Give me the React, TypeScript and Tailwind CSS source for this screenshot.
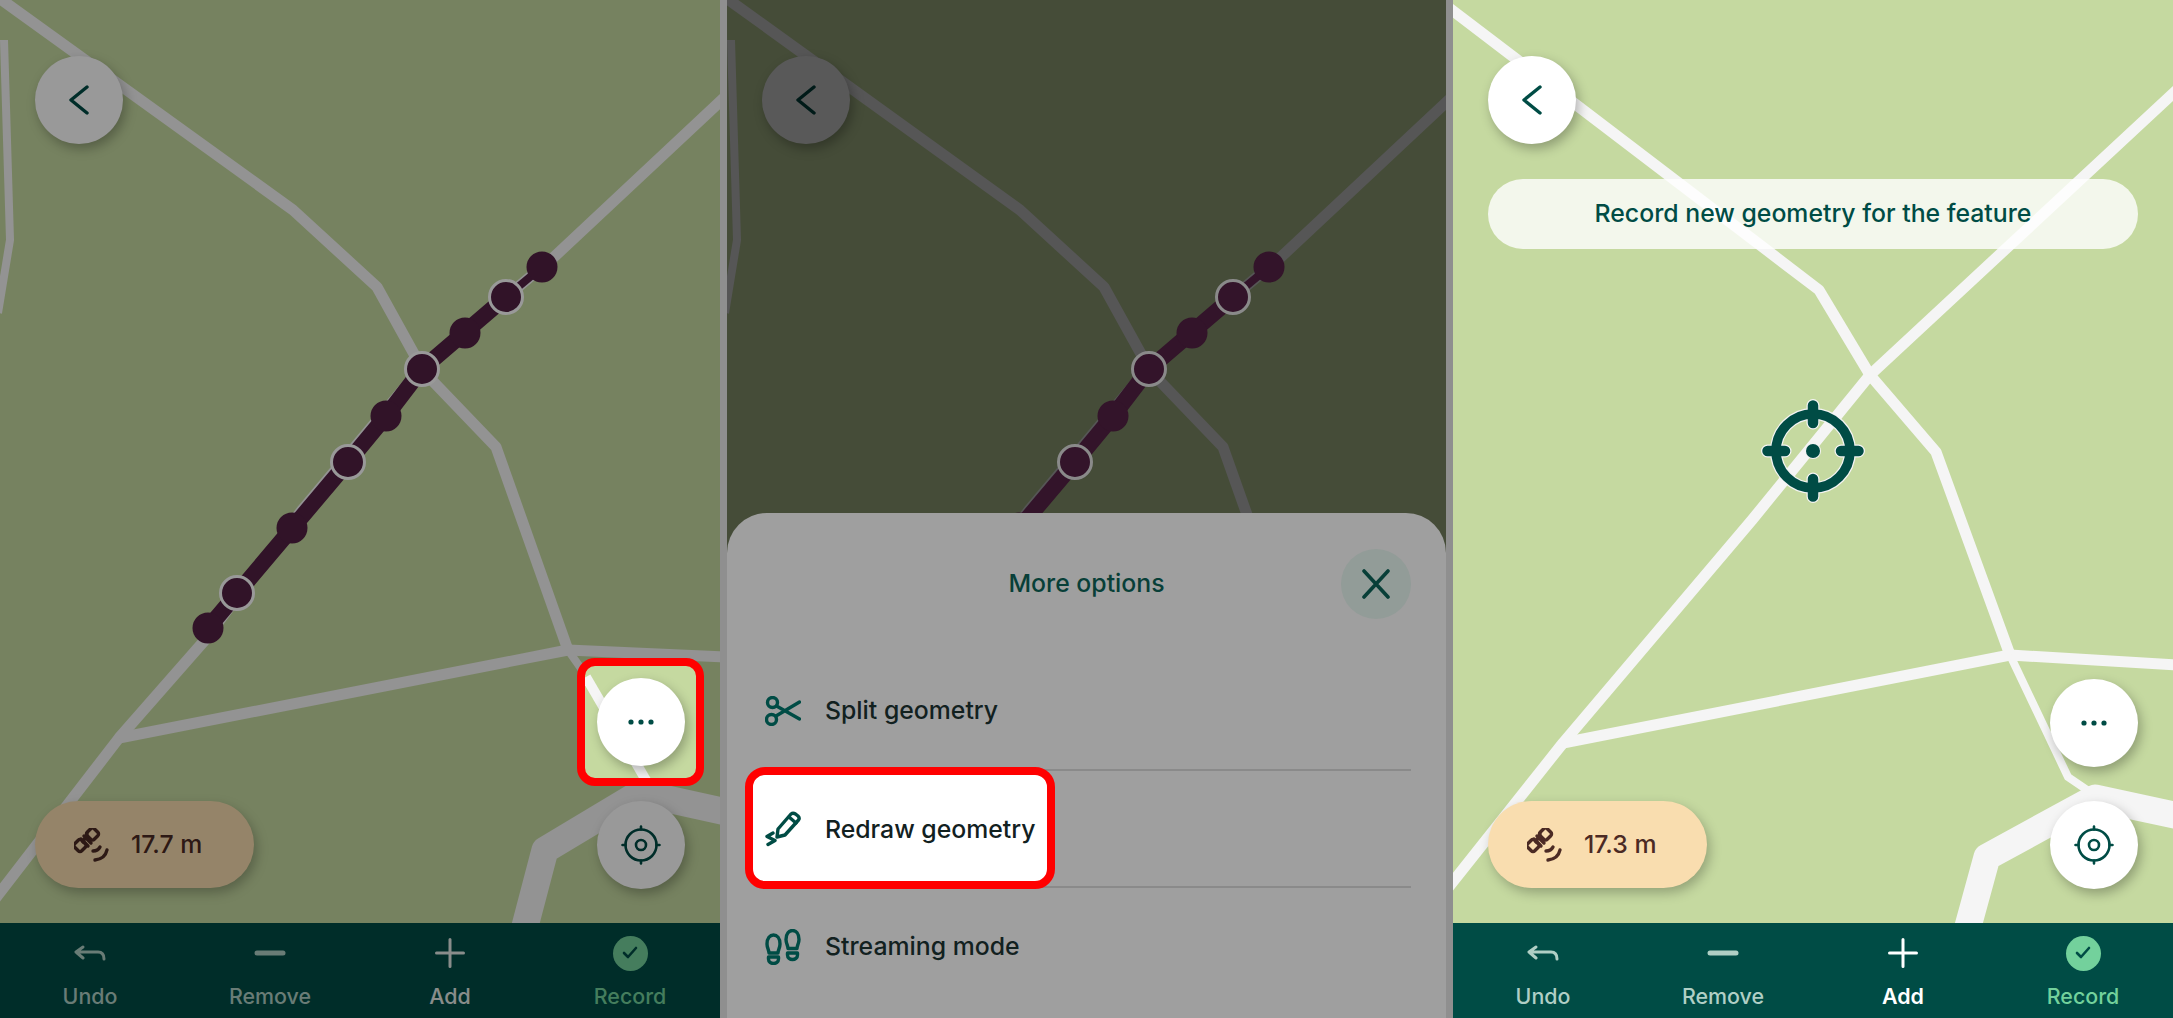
import type { ReactNode } from "react";

const GREEN = "#004c45";

type Road = { d: string; w: number };

const roadsLeft: Road[] = [
  { d: "M-5 -5 L293 210 L377 287 L424 372 L496 447 L568 650", w: 11 },
  { d: "M726 96 L554 257 L421 368 L302 510 L205 640 L119 738 L-5 899", w: 11 },
  { d: "M726 657 L568 650 L119 738", w: 11 },
  { d: "M568 650 L587 677 L647 790", w: 8 },
  { d: "M726 812 L640 793 L545 850 L524 930", w: 27 },
  { d: "M4 40 L10 240 L-2 313", w: 8 },
];

const roadsRight: Road[] = [
  { d: "M-5 7 L366 290 L417 375 L483 452 L557 655", w: 11 },
  { d: "M726 88 L417 375 L299 520 L110 743 L-5 888", w: 11 },
  { d: "M726 665 L557 655 L110 743", w: 11 },
  { d: "M557 655 L615 777 L640 794", w: 8 },
  { d: "M726 816 L642 798 L534 857 L514 930", w: 27 },
];

const nodes = [
  { x: 208, y: 628, ring: false },
  { x: 237, y: 593, ring: true },
  { x: 292, y: 528, ring: false },
  { x: 348, y: 462, ring: true },
  { x: 386, y: 416, ring: false },
  { x: 422, y: 369, ring: true },
  { x: 465, y: 333, ring: false },
  { x: 506, y: 297, ring: true },
  { x: 542, y: 267, ring: false },
];

function MapLines({ roads, color }: { roads: Road[]; color: string }) {
  return (
    <svg className="absolute inset-0 w-[720px] h-[923px]" viewBox="0 0 720 923" fill="none">
      {roads.map((r) => (
        <path key={r.d} d={r.d} stroke={color} strokeWidth={r.w} strokeLinejoin="round" />
      ))}
    </svg>
  );
}

function Track({ color, ring }: { color: string; ring: string }) {
  return (
    <svg className="absolute inset-0 w-[720px] h-[923px]" viewBox="0 0 720 923" fill="none">
      <path d="M208 628 L348 462 L386 416 L422 369 L506 297" stroke={color} strokeWidth={16} />
      <path d="M506 297 L542 267" stroke={color} strokeWidth={8} />
      {nodes.map((n) => (
        <circle
          key={n.x}
          cx={n.x}
          cy={n.y}
          r={n.ring ? 16.5 : 15.5}
          fill={color}
          stroke={n.ring ? ring : "none"}
          strokeWidth={3}
        />
      ))}
    </svg>
  );
}

function RoundButton({ className, children }: { className?: string; children: ReactNode }) {
  return (
    <div
      className={`w-[88px] h-[88px] rounded-full bg-white flex items-center justify-center shadow-[3px_5px_12px_rgba(0,0,0,0.28)] ${className ?? ""}`}
    >
      {children}
    </div>
  );
}

function Chevron() {
  return (
    <svg width="20" height="30" viewBox="0 0 20 30" fill="none" stroke={GREEN} strokeWidth="3.4" strokeLinecap="round" strokeLinejoin="round">
      <path d="M18 2 L2 15 L18 28" />
    </svg>
  );
}

function Dots() {
  return (
    <svg width="28" height="6" viewBox="0 0 28 6" fill={GREEN}>
      <circle cx="4" cy="3" r="2.6" />
      <circle cx="14" cy="3" r="2.6" />
      <circle cx="24" cy="3" r="2.6" />
    </svg>
  );
}

function Target() {
  return (
    <svg width="40" height="40" viewBox="0 0 40 40" fill="none" stroke={GREEN} strokeWidth="2.6" strokeLinecap="round">
      <circle cx="20" cy="20" r="15.5" />
      <circle cx="20" cy="20" r="5" />
      <path d="M20 1.5 V4.5 M20 35.5 V38.5 M1.5 20 H4.5 M35.5 20 H38.5" />
    </svg>
  );
}

function SatelliteOff() {
  return (
    <svg width="36" height="34" viewBox="0 0 36 34" fill="none" stroke="#4b2a24" strokeWidth="3.4" strokeLinecap="round" strokeLinejoin="round">
      <rect x="13.5" y="1" width="10" height="10" rx="2.5" transform="rotate(45 18.5 6)" />
      <rect x="1" y="12.5" width="10" height="10" rx="2.5" transform="rotate(45 6 17.5)" />
      <path d="M10 8 L17 15 M7 11 L14 18 M13 6 L9 14" />
      <path d="M19 23 Q24 23 26 19" />
      <path d="M21 32 Q31 31 33 22" />
    </svg>
  );
}

function GpsPill({ value }: { value: string }) {
  return (
    <div className="absolute left-[35px] top-[801px] w-[219px] h-[87px] rounded-full bg-[#f9ddaf] flex items-center pl-[39px] gap-[21px] text-[24.8px] font-medium text-[#4b2a24] shadow-[3px_5px_12px_rgba(0,0,0,0.25)]">
      <SatelliteOff />
      <span>{value}</span>
    </div>
  );
}

function BottomBar({ addActive }: { addActive?: boolean }) {
  const items = [
    {
      label: "Undo",
      cls: "text-[#b0cfc5]",
      icon: (
        <svg width="32" height="16" viewBox="0 0 32 16" fill="none" stroke="currentColor" strokeWidth="3" strokeLinecap="round" strokeLinejoin="round">
          <path d="M9 2 L2 7 L9 13 M2 7 H24 Q30 7 30 14" />
        </svg>
      ),
    },
    {
      label: "Remove",
      cls: "text-[#b0cfc5]",
      icon: (
        <svg width="32" height="6" viewBox="0 0 32 6" fill="none" stroke="currentColor" strokeWidth="5" strokeLinecap="round">
          <path d="M3 3 H29" />
        </svg>
      ),
    },
    {
      label: "Add",
      cls: addActive ? "text-white font-semibold" : "text-[#e4ebe8]",
      icon: (
        <svg width="30" height="30" viewBox="0 0 30 30" fill="none" stroke="currentColor" strokeWidth="3" strokeLinecap="round">
          <path d="M15 1.5 V28.5 M1.5 15 H28.5" />
        </svg>
      ),
    },
    {
      label: "Record",
      cls: "text-[#73d19c]",
      icon: (
        <span className="w-[35px] h-[35px] rounded-full bg-[#73d19c] flex items-center justify-center">
          <svg width="16" height="14" viewBox="0 0 16 14" fill="none" stroke={GREEN} strokeWidth="2.6" strokeLinecap="round" strokeLinejoin="round">
            <path d="M2 7 L6 11 L14 2" />
          </svg>
        </span>
      ),
    },
  ];

  return (
    <div className="h-[95px] shrink-0 bg-[#004c45] flex">
      {items.map((item) => (
        <div key={item.label} className={`flex-1 flex flex-col items-center pt-[12px] text-[21.4px] font-medium ${item.cls}`}>
          <div className="h-[36px] flex items-center">{item.icon}</div>
          <div className="mt-[13px] leading-[24px]">{item.label}</div>
        </div>
      ))}
    </div>
  );
}

function Scissors() {
  return (
    <svg width="36" height="30" viewBox="0 0 36 30" fill="none" stroke={GREEN} strokeWidth="3.4" strokeLinecap="round">
      <circle cx="7.5" cy="6.5" r="5" />
      <circle cx="6.5" cy="23.5" r="5" />
      <path d="M11.5 10 L34.5 23 M11 20 L34.5 6" />
    </svg>
  );
}

function Pencil() {
  return (
    <svg width="36" height="36" viewBox="0 0 36 36" fill="none" stroke={GREEN} strokeWidth="3.4" strokeLinecap="round" strokeLinejoin="round">
      <path d="M12 26 L13 18 L26 3 Q28 1.5 30.5 3 L33 5 Q35 7 33.5 9 L20 24 Z" />
      <path d="M24 6 L31 12" />
      <path d="M8 22 L2 25.5 L10 29.5 L3 33.5" />
    </svg>
  );
}

function Footprints() {
  return (
    <svg width="36" height="36" viewBox="0 0 36 36" fill="none" stroke={GREEN} strokeWidth="3.4" strokeLinecap="round" strokeLinejoin="round">
      <path d="M2 15 C2 9 5 6 8.5 6 C12 6 15 9 15 15 C15 19 13 21 13 24 H4 C4 21 2 19 2 15 Z" />
      <path d="M3.5 28 H13.5 V30 C13.5 33 11 34.5 8.5 34.5 C6 34.5 3.5 33 3.5 30 Z" />
      <path d="M21 10.5 C21 4.5 24 1.5 27.5 1.5 C31 1.5 34 4.5 34 10.5 C34 14.5 32 16.5 32 19.5 H23 C23 16.5 21 14.5 21 10.5 Z" />
      <path d="M22.5 24 H32.5 V26 C32.5 29 30 30.5 27.5 30.5 C25 30.5 22.5 29 22.5 26 Z" />
    </svg>
  );
}

function Crosshair() {
  const tick = "M60 14.5 V32 M60 88 V105.5 M14.5 60 H32 M88 60 H105.5";
  return (
    <svg className="absolute left-[300px] top-[391px] w-[120px] h-[120px]" viewBox="0 0 120 120" fill="none" strokeLinecap="round">
      <circle cx="60" cy="60" r="37" stroke="#f4f4f4" strokeWidth="12" />
      <path d={tick} stroke="#f4f4f4" strokeWidth="13" />
      <circle cx="60" cy="60" r="8" fill="#f4f4f4" />
      <circle cx="60" cy="60" r="37" stroke={GREEN} strokeWidth="9.5" />
      <path d={tick} stroke={GREEN} strokeWidth="10.5" />
      <circle cx="60" cy="60" r="7" fill={GREEN} />
    </svg>
  );
}

function FirstPanel() {
  return (
    <div className="relative w-[720px] h-full shrink-0 flex flex-col overflow-hidden">
      <div className="relative flex-1 bg-[#c5d9a0]">
        <MapLines roads={roadsLeft} color="#f5f5f5" />
        <Track color="#522044" ring="#ffffff" />
        <RoundButton className="absolute left-[35px] top-[56px]">
          <Chevron />
        </RoundButton>
        <GpsPill value="17.7 m" />
        <RoundButton className="absolute left-[597px] top-[801px]">
          <Target />
        </RoundButton>
      </div>
      <BottomBar />
      <div className="absolute inset-0 bg-black/40" />
      {/* highlighted button, shown without the dimming */}
      <div className="absolute left-[577px] top-[658px] w-[127px] h-[128px] rounded-[18px] border-8 border-[#ff0000] bg-[#c5d9a0] overflow-hidden flex items-center justify-center">
        <svg className="absolute inset-0 w-[111px] h-[112px]" viewBox="0 0 111 112" fill="none">
          <path d="M1 11 L62 116" stroke="#f5f5f5" strokeWidth="10" />
        </svg>
        <RoundButton className="relative">
          <Dots />
        </RoundButton>
      </div>
    </div>
  );
}

function SheetRow({ icon, label, last }: { icon: ReactNode; label: string; last?: boolean }) {
  return (
    <div className={`relative h-[117.5px] flex items-center pl-[3px] gap-[24px] ${last ? "" : "border-b-2 border-[#8a8a8a]"}`}>
      <div className="w-[36px] flex justify-center">{icon}</div>
      <span className="text-[24.8px] font-medium text-[#12211f]">{label}</span>
    </div>
  );
}

function MiddlePanel() {
  return (
    <div className="relative w-[719px] h-full shrink-0 overflow-hidden">
      <div className="absolute inset-0 bg-[#c5d9a0]">
        <MapLines roads={roadsLeft} color="#f5f5f5" />
        <RoundButton className="absolute left-[35px] top-[56px]">
          <Chevron />
        </RoundButton>
      </div>
      <div className="absolute inset-0 bg-black/65" />
      <Track color="#33142a" ring="#8a8a8a" />
      <div className="absolute left-0 right-0 top-[513px] bottom-0 rounded-t-[40px] bg-[#9f9f9f] px-[35px]">
        <div className="relative flex items-center justify-center h-[70px] mt-[36px] mb-[34px]">
          <span className="text-[24.8px] font-medium text-[#083f38]">More options</span>
          <div className="absolute right-0 top-0 w-[70px] h-[70px] rounded-full bg-[#929c98] flex items-center justify-center">
            <svg width="30" height="30" viewBox="0 0 30 30" fill="none" stroke="#083f38" strokeWidth="3.6" strokeLinecap="round">
              <path d="M3 2 L27 28 M27 2 L3 28" />
            </svg>
          </div>
        </div>
        <SheetRow icon={<Scissors />} label="Split geometry" />
        <div className="relative">
          <div className="absolute -left-[17px] -top-[4px] w-[310px] h-[122px] rounded-[20px] border-8 border-[#ff0000] bg-white z-10" />
          <div className="relative z-20 flex items-center h-[117.5px] pl-[3px] gap-[24px]">
            <div className="w-[36px] flex justify-center">
              <Pencil />
            </div>
            <span className="text-[24.8px] font-medium text-[#12211f]">Redraw geometry</span>
          </div>
          <div className="absolute left-0 right-0 bottom-0 h-[2px] bg-[#8a8a8a]" />
        </div>
        <SheetRow icon={<Footprints />} label="Streaming mode" last />
      </div>
    </div>
  );
}

function LastPanel() {
  return (
    <div className="relative w-[720px] h-full shrink-0 flex flex-col overflow-hidden">
      <div className="relative flex-1 bg-[#c5d9a0]">
        <MapLines roads={roadsRight} color="#f5f5f5" />
        <Crosshair />
        <RoundButton className="absolute left-[35px] top-[56px]">
          <Chevron />
        </RoundButton>
        <div className="absolute left-[35px] top-[179px] w-[650px] h-[70px] rounded-full bg-white/80 flex items-center justify-center text-[24.8px] font-medium text-[#004c45]">
          Record new geometry for the feature
        </div>
        <GpsPill value="17.3 m" />
        <RoundButton className="absolute left-[597px] top-[679px]">
          <Dots />
        </RoundButton>
        <RoundButton className="absolute left-[597px] top-[801px]">
          <Target />
        </RoundButton>
      </div>
      <BottomBar addActive />
    </div>
  );
}

export default function App() {
  return (
    <div className="w-[2173px] h-[1018px] flex gap-[7px] bg-[#8f8f8f] overflow-hidden [font-family:Inter,sans-serif]">
      <FirstPanel />
      <MiddlePanel />
      <LastPanel />
    </div>
  );
}
